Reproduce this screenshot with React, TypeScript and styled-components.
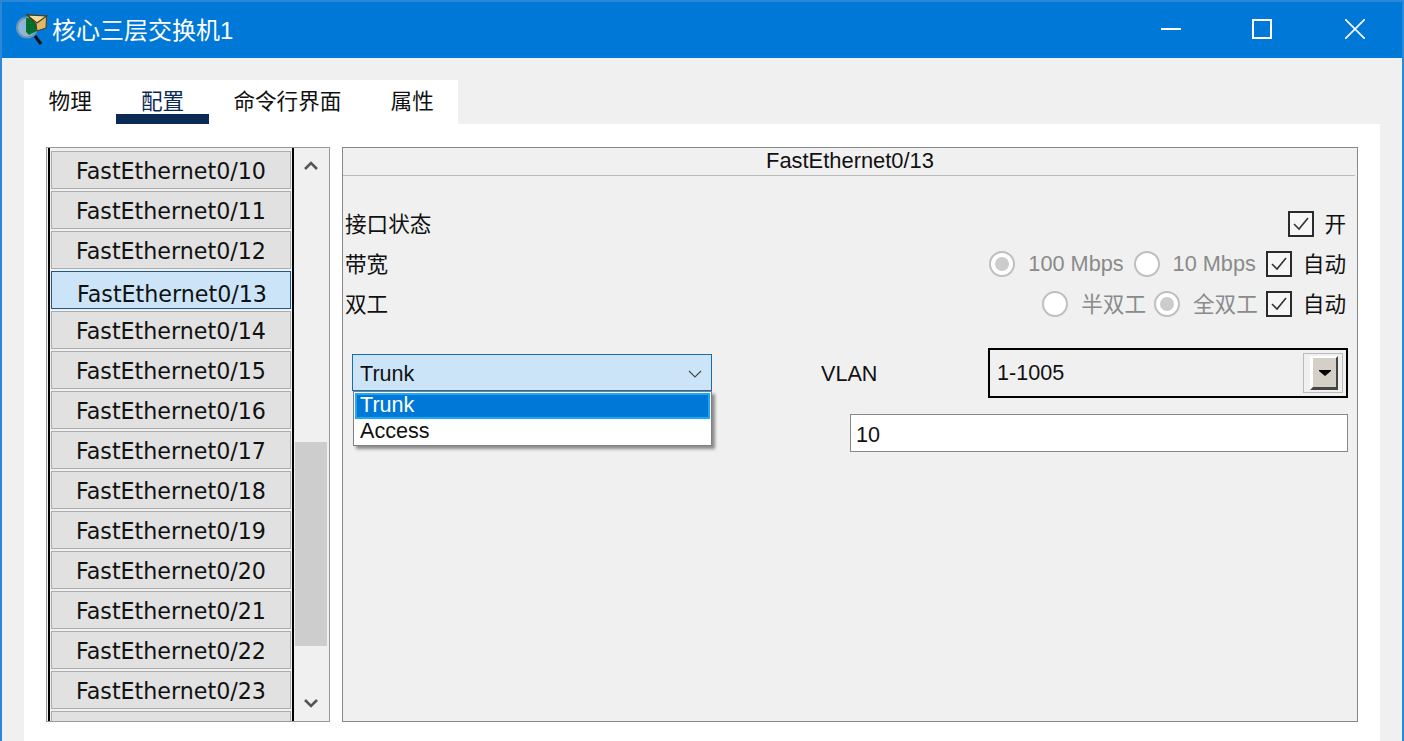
import { FC } from "react";
import styled, { createGlobalStyle } from "styled-components";

const PORTS = [10, 11, 12, 13, 14, 15, 16, 17, 18, 19, 20, 21, 22, 23];
const TABS = ["物理", "配置", "命令行界面", "属性"];

const GlobalStyle = createGlobalStyle`
  html, body {
    margin: 0;
    padding: 0;
    overflow: hidden;
  }
  * {
    box-sizing: border-box;
  }
`;

const AppIcon: FC = () => (
  <svg width="36" height="36" viewBox="0 0 36 36">
    <path d="M20 24l6 8" stroke="#111" strokeWidth="3" />
    <circle cx="12" cy="15.5" r="10" fill="#8fb6d8" stroke="#6d93b5" strokeWidth="2" />
    <path d="M11 6h11v13l-8 4-3-3z" fill="#0a7a28" />
    <path d="M11 10h11M11 13h11M11 16h11M11 19h9M14 7v15M17 7v14M20 7v12" stroke="#063" strokeWidth="1" />
    <path d="M12 3l19.5 1-.5 12-9 3-1-7z" fill="#e0b868" stroke="#4a3a18" strokeWidth="1" />
    <path d="M12 3l10 8 9.500-7z" fill="#f3dc9c" stroke="#4a3a18" strokeWidth="1.2" />
  </svg>
);

const CheckBox: FC = () => (
  <StyledCheck>
    <svg width="22" height="22" viewBox="0 0 22 22">
      <path d="M4 11l5 5 9-11" fill="none" stroke="#333" strokeWidth="1.6" />
    </svg>
  </StyledCheck>
);

const App: FC = () => (
  <StyledWindow>
    <GlobalStyle />
    <StyledTitleBar>
      <StyledTitleIcon>
        <AppIcon />
      </StyledTitleIcon>
      <StyledTitle>核心三层交换机1</StyledTitle>
      <StyledWindowButton $width={88}>
        <svg width="20" height="20" viewBox="0 0 20 20">
          <path d="M0 10h20" stroke="#fff" strokeWidth="2" />
        </svg>
      </StyledWindowButton>
      <StyledWindowButton $width={93}>
        <svg width="20" height="20" viewBox="0 0 20 20">
          <rect x="1" y="1" width="18" height="18" fill="none" stroke="#fff" strokeWidth="2" />
        </svg>
      </StyledWindowButton>
      <StyledWindowButton $width={94}>
        <svg width="20" height="20" viewBox="0 0 20 20">
          <path d="M0 0l20 20M20 0L0 20" stroke="#fff" strokeWidth="1.6" />
        </svg>
      </StyledWindowButton>
    </StyledTitleBar>

    <StyledBody>
      <StyledTabs>
        {TABS.map((tab) => (
          <StyledTab key={tab} $active={tab === "配置"}>
            {tab}
          </StyledTab>
        ))}
      </StyledTabs>

      <StyledContent>
        <StyledPortBox>
          <StyledPortList>
            {PORTS.map((port) => (
              <StyledPort key={port} $active={port === 13}>
                FastEthernet0/{port}
              </StyledPort>
            ))}
            <StyledPort />
          </StyledPortList>
          <StyledScrollBar>
            <StyledScrollArrow>
              <svg width="16" height="12" viewBox="0 0 16 12">
                <path d="M2 9l6-6 6 6" fill="none" stroke="#555" strokeWidth="2.6" />
              </svg>
            </StyledScrollArrow>
            <StyledScrollTrack>
              <StyledScrollThumb />
            </StyledScrollTrack>
            <StyledScrollArrow>
              <svg width="16" height="12" viewBox="0 0 16 12">
                <path d="M2 3l6 6 6-6" fill="none" stroke="#555" strokeWidth="2.6" />
              </svg>
            </StyledScrollArrow>
          </StyledScrollBar>
        </StyledPortBox>

        <StyledPanel>
          <StyledPanelTitle>FastEthernet0/13</StyledPanelTitle>

          <StyledRows>
            <StyledRow>
              <StyledLabel>接口状态</StyledLabel>
              <StyledOptions>
                <CheckBox />
                <StyledOptionText $gap={10}>开</StyledOptionText>
              </StyledOptions>
            </StyledRow>
            <StyledRow>
              <StyledLabel>带宽</StyledLabel>
              <StyledOptions>
                <StyledRadio $checked />
                <StyledMuted>100 Mbps</StyledMuted>
                <StyledRadio />
                <StyledMuted>10 Mbps</StyledMuted>
                <CheckBox />
                <StyledOptionText $gap={11}>自动</StyledOptionText>
              </StyledOptions>
            </StyledRow>
            <StyledRow>
              <StyledLabel>双工</StyledLabel>
              <StyledOptions>
                <StyledRadio />
                <StyledMuted $cjk>半双工</StyledMuted>
                <StyledRadio $checked />
                <StyledMuted $cjk>全双工</StyledMuted>
                <CheckBox />
                <StyledOptionText $gap={11}>自动</StyledOptionText>
              </StyledOptions>
            </StyledRow>
          </StyledRows>

          <StyledModeRow>
            <StyledModeSelect>
              <StyledModeValue>
                Trunk
                <svg width="14" height="8" viewBox="0 0 14 8">
                  <path d="M1 1l6 6 6-6" fill="none" stroke="#444" strokeWidth="1.1" />
                </svg>
              </StyledModeValue>
              <StyledModeMenu>
                <StyledModeOption $active>Trunk</StyledModeOption>
                <StyledModeOption>Access</StyledModeOption>
              </StyledModeMenu>
            </StyledModeSelect>
            <StyledVlanLabel>VLAN</StyledVlanLabel>
            <StyledVlanSelect>
              1-1005
              <StyledVlanButtonFrame>
                <StyledVlanButton>
                  <svg width="12" height="6" viewBox="0 0 12 6">
                    <path d="M0 0h12v1L6 6 0 1z" fill="#000" />
                  </svg>
                </StyledVlanButton>
              </StyledVlanButtonFrame>
            </StyledVlanSelect>
          </StyledModeRow>

          <StyledVlanInput>10</StyledVlanInput>
        </StyledPanel>
      </StyledContent>
    </StyledBody>
  </StyledWindow>
);

const StyledWindow = styled.div`
  display: flex;
  flex-direction: column;
  width: 1404px;
  height: 741px;
  border: 2px solid #2b88d8;
  border-bottom: none;
  background-color: #f0f0f0;
  font-family: "Liberation Sans", "Noto Sans CJK SC", sans-serif;
  font-size: 21.6px;
  color: #111;
  overflow: hidden;
`;

const StyledTitleBar = styled.div`
  display: flex;
  align-items: center;
  flex-shrink: 0;
  height: 56px;
  padding-left: 13px;
  background-color: #0078d7;
  color: white;
`;

const StyledTitleIcon = styled.div`
  display: flex;
  width: 37px;
`;

const StyledTitle = styled.div`
  flex: 1;
  padding-bottom: 4px;
  font-size: 24px;
`;

const StyledWindowButton = styled.div<{ $width: number }>`
  display: flex;
  align-items: center;
  justify-content: center;
  width: ${(props) => props.$width}px;
  height: 56px;
  padding-bottom: 2px;
`;

const StyledBody = styled.div`
  display: flex;
  flex: 1;
  flex-direction: column;
  min-height: 0;
  padding: 22px 22px 0;
`;

const StyledTabs = styled.div`
  display: flex;
  flex-shrink: 0;
  align-self: flex-start;
  height: 44px;
  background-color: white;
`;

const StyledTab = styled.div<{ $active?: boolean }>`
  position: relative;
  display: flex;
  align-items: center;
  padding: 0 24.6px 5px;
  color: ${(props) => (props.$active ? "#0c2a56" : "#111")};

  &::after {
    content: "";
    display: ${(props) => (props.$active ? "block" : "none")};
    position: absolute;
    left: 0;
    right: 0;
    bottom: 0;
    height: 10px;
    background-color: #0c2a56;
  }
`;

const StyledContent = styled.div`
  display: flex;
  flex: 1;
  gap: 12px;
  min-height: 0;
  padding: 23px 22px 19px;
  background-color: white;
`;

const StyledPortBox = styled.div`
  display: flex;
  flex-shrink: 0;
  width: 284px;
  padding-left: 1px;
  border: 1px solid #999;
  background-color: #f0f0f0;
`;

const StyledPortList = styled.div`
  display: flex;
  flex-direction: column;
  flex-shrink: 0;
  gap: 2px;
  width: 246px;
  padding: 3px 1px 0;
  border-left: 2px solid black;
  border-right: 2px solid black;
  background-color: #f0f0f0;
  overflow: hidden;
`;

const StyledPort = styled.div<{ $active?: boolean }>`
  flex-shrink: 0;
  height: 38px;
  padding: ${(props) => (props.$active ? "4px 0 0 2px" : "1px 0 0")};
  border: 1px solid ${(props) => (props.$active ? "#1d5a8a" : "#adadad")};
  background-color: ${(props) => (props.$active ? "#cce4f7" : "#e1e1e1")};
  font-family: "DejaVu Sans", sans-serif;
  font-size: 22.2px;
  line-height: 36px;
  text-align: center;
  color: #111;
`;

const StyledScrollBar = styled.div`
  display: flex;
  flex: 1;
  flex-direction: column;
  padding: 0 2px 0 1px;
`;

const StyledScrollArrow = styled.div`
  display: flex;
  align-items: center;
  justify-content: center;
  flex-shrink: 0;
  height: 37px;

  &:first-child {
    padding-bottom: 2px;
  }
`;

const StyledScrollTrack = styled.div`
  flex: 1;
  padding-top: 257px;
`;

const StyledScrollThumb = styled.div`
  height: 204px;
  background-color: #cdcdcd;
`;

const StyledPanel = styled.div`
  display: flex;
  flex: 1;
  flex-direction: column;
  border: 1px solid #888;
  background-color: #f0f0f0;
`;

const StyledPanelTitle = styled.div`
  flex-shrink: 0;
  height: 28px;
  margin-right: 2px;
  border-bottom: 1px solid #bbb;
  font-size: 21.9px;
  line-height: 25px;
  text-align: center;
  text-indent: 2px;
`;

const StyledRows = styled.div`
  display: flex;
  flex-direction: column;
  margin-top: 28px;
  padding: 0 11px 0 2px;
`;

const StyledRow = styled.div`
  display: flex;
  align-items: center;
  justify-content: space-between;
  height: 40px;
`;

const StyledLabel = styled.span`
  padding-bottom: 4px;
`;

const StyledOptions = styled.div`
  display: flex;
  align-items: center;
`;

const StyledOptionText = styled.span<{ $gap: number }>`
  margin-left: ${(props) => props.$gap}px;
  padding-bottom: 4px;
`;

const StyledMuted = styled.span<{ $cjk?: boolean }>`
  margin: ${(props) => (props.$cjk ? "0 8px 0 13px" : "0 10px 0 13px")};
  padding-bottom: ${(props) => (props.$cjk ? "4px" : "0")};
  font-size: ${(props) => (props.$cjk ? "21.6px" : "21.7px")};
  color: #8a8a8a;
`;

const StyledRadio = styled.span<{ $checked?: boolean }>`
  position: relative;
  display: block;
  flex-shrink: 0;
  width: 26px;
  height: 26px;
  border: 2px solid #bfbfbf;
  border-radius: 50%;
  background-color: white;

  &::after {
    content: "";
    display: ${(props) => (props.$checked ? "block" : "none")};
    position: absolute;
    inset: 4px;
    border-radius: 50%;
    background-color: #cccccc;
  }
`;

const StyledCheck = styled.span`
  display: flex;
  flex-shrink: 0;
  width: 26px;
  height: 26px;
  border: 2px solid #2b2b2b;
  background-color: #f6f6f6;
`;

const StyledModeRow = styled.div`
  display: flex;
  align-items: flex-start;
  height: 50px;
  margin-top: 24px;
  padding: 0 9px;
`;

const StyledModeSelect = styled.div`
  position: relative;
  flex-shrink: 0;
  width: 360px;
  margin-top: 6px;
`;

const StyledModeValue = styled.div`
  display: flex;
  align-items: center;
  justify-content: space-between;
  height: 37px;
  padding: 2px 9px 0 7px;
  border: 1px solid #1b6cab;
  background-color: #cce4f7;
`;

const StyledModeMenu = styled.div`
  position: absolute;
  top: 100%;
  left: 1px;
  right: 0;
  display: flex;
  flex-direction: column;
  height: 55px;
  padding: 1px;
  border: 1px solid #808080;
  background-color: white;
  box-shadow: 3px 3px 3px #8a8a8a;
  z-index: 1;
`;

const StyledModeOption = styled.div<{ $active?: boolean }>`
  height: 26px;
  padding-left: ${(props) => (props.$active ? "3px" : "5px")};
  border: ${(props) => (props.$active ? "2px solid #1ca8f5" : "none")};
  background-color: ${(props) => (props.$active ? "#0078d7" : "white")};
  color: ${(props) => (props.$active ? "white" : "#111")};
  line-height: ${(props) => (props.$active ? "20px" : "24px")};
`;

const StyledVlanLabel = styled.span`
  margin-left: 109px;
  line-height: 52px;
`;

const StyledVlanSelect = styled.div`
  display: flex;
  align-items: center;
  justify-content: space-between;
  width: 360px;
  height: 50px;
  margin-left: auto;
  padding: 0 3px 0 7px;
  border: 2px solid #000;
`;

const StyledVlanButtonFrame = styled.div`
  display: flex;
  width: 40px;
  height: 40px;
  padding: 2px 4px 2px 6px;
  border: 1px solid #bbb;
  background-color: #f0f0f0;
`;

const StyledVlanButton = styled.div`
  display: flex;
  align-items: center;
  justify-content: center;
  flex: 1;
  border-top: 2px solid white;
  border-left: 3px solid white;
  border-right: 2px solid #444;
  border-bottom: 3px solid #444;
  background-color: #d4d0c8;
`;

const StyledVlanInput = styled.div`
  align-self: flex-end;
  width: 498px;
  height: 38px;
  margin: 16px 9px 0 0;
  padding-left: 5px;
  border: 1px solid #888;
  background-color: white;
  line-height: 40px;
`;

export default App;
